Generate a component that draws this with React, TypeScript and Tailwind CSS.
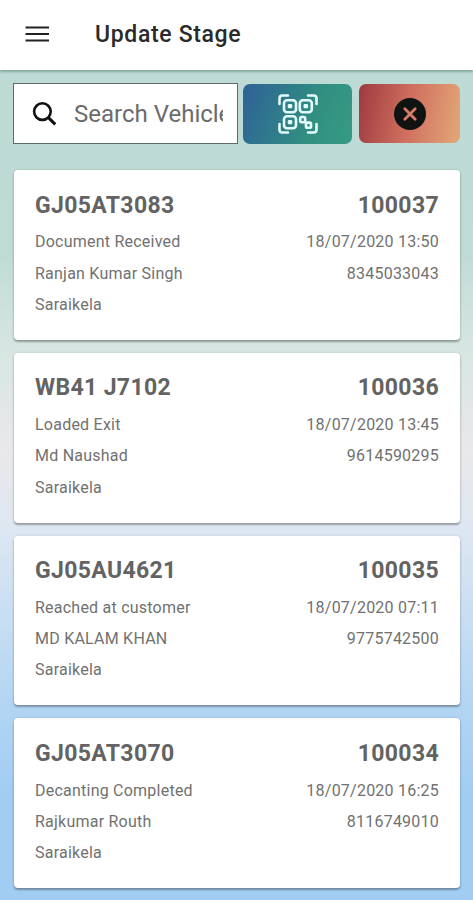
import { useState } from 'react'

interface Vehicle {
  number: string
  token: string
  stage: string
  time: string
  driver: string
  phone: string
  location: string
}

const vehicles: Vehicle[] = [
  { number: 'GJ05AT3083', token: '100037', stage: 'Document Received', time: '18/07/2020 13:50', driver: 'Ranjan Kumar Singh', phone: '8345033043', location: 'Saraikela' },
  { number: 'WB41 J7102', token: '100036', stage: 'Loaded Exit', time: '18/07/2020 13:45', driver: 'Md Naushad', phone: '9614590295', location: 'Saraikela' },
  { number: 'GJ05AU4621', token: '100035', stage: 'Reached at customer', time: '18/07/2020 07:11', driver: 'MD KALAM KHAN', phone: '9775742500', location: 'Saraikela' },
  { number: 'GJ05AT3070', token: '100034', stage: 'Decanting Completed', time: '18/07/2020 16:25', driver: 'Rajkumar Routh', phone: '8116749010', location: 'Saraikela' },
]

function MenuIcon() {
  return (
    <svg className="h-[18px] w-6" viewBox="0 0 24 18" stroke="#222" strokeWidth="2.2">
      <path d="M.5 1.5h23.5M.5 8h23.5M.5 14.5h23.5" />
    </svg>
  )
}

function SearchIcon() {
  return (
    <svg className="h-6 w-6 shrink-0" viewBox="0 0 24 24" fill="none" stroke="#111" strokeWidth="2.6">
      <circle cx="10.4" cy="9.6" r="8.3" />
      <path d="M16.2 15.4l7 7" strokeWidth="3" />
    </svg>
  )
}

function QrIcon() {
  return (
    <svg className="h-10 w-10" viewBox="0 0 40 40" fill="none" stroke="#e2fbfa" strokeWidth="2.6" strokeLinecap="round" strokeLinejoin="round">
      <path d="M1.5 10V4.3a2.8 2.8 0 0 1 2.8-2.8H10M30 1.5h5.7a2.8 2.8 0 0 1 2.8 2.8V10M38.5 30v5.7a2.8 2.8 0 0 1-2.8 2.8H30M10 38.5H4.3a2.8 2.8 0 0 1-2.8-2.8V30" />
      <rect x="6" y="6.2" width="12" height="12" rx="3" />
      <rect x="21.8" y="6.2" width="12" height="12" rx="3" />
      <rect x="6" y="22.2" width="12" height="12" rx="3" />
      <path d="M11 11.4h2v1.6h-2zM26.8 11.4h2v1.6h-2zM11 27.4h2v1.6h-2z" />
      <rect x="22.2" y="23" width="5" height="5.2" rx="1.4" />
      <rect x="28" y="28.6" width="5" height="5.2" rx="1.4" />
      <path d="M27 28l1.2 1" />
    </svg>
  )
}

function ClearIcon() {
  return (
    <svg className="h-8 w-8" viewBox="0 0 32 32">
      <circle cx="16" cy="16" r="16" fill="#111312" />
      <path d="M10.8 10.8l10.4 10.4M21.2 10.8L10.8 21.2" stroke="#d97b69" strokeWidth="2.8" strokeLinecap="round" />
    </svg>
  )
}

function VehicleCard({ vehicle }: { vehicle: Vehicle }) {
  return (
    <div className="h-[169.7px] rounded-[4px] bg-white px-[21px] pt-[19.6px] text-[#717171] shadow-[0_2px_2px_rgba(0,0,0,0.3),0_0_3px_rgba(0,0,0,0.12)]">
      <div className="flex h-8 items-center justify-between text-[23px] font-bold tracking-[0.35px] text-[#636363]">
        <span>{vehicle.number}</span>
        <span>{vehicle.token}</span>
      </div>
      <div className="flex h-[31.2px] items-center justify-between pt-[9.8px] text-[16px] tracking-[0.23px]">
        <span>{vehicle.stage}</span>
        <span>{vehicle.time}</span>
      </div>
      <div className="flex h-[31.2px] items-center justify-between pt-[9.8px] text-[16px] tracking-[0.23px]">
        <span>{vehicle.driver}</span>
        <span>{vehicle.phone}</span>
      </div>
      <div className="flex h-[31.2px] items-center pt-[9.8px] text-[16px] tracking-[0.23px]">
        <span>{vehicle.location}</span>
      </div>
    </div>
  )
}

export default function App() {
  const [search, setSearch] = useState('')

  const filtered = vehicles.filter(v => v.number.toLowerCase().includes(search.toLowerCase()))

  return (
    <div className="h-[900px] w-full overflow-hidden bg-[linear-gradient(to_bottom,#bcdad3_0%,#bfdbd6_28%,#d7e6e2_39%,#e9e8ea_50%,#dde7f2_59%,#b5d6f3_77%,#a2cdf3_88%,#a2cdf3_100%)] font-[Roboto,sans-serif]">
      <header className="flex h-[70px] items-center bg-white pl-[25px] shadow-[0_2px_2px_rgba(70,110,100,0.45)]">
        <button aria-label="Menu">
          <MenuIcon />
        </button>
        <h1 className="pl-[46px] text-[23px] font-medium tracking-[0.66px] text-[#2a2a2a]">Update Stage</h1>
      </header>

      <main className="px-[13px] pt-[13px]">
        <div className="flex items-start">
          <div className="flex h-[61px] w-[225px] items-center gap-[18px] border-[1.5px] border-[#5f6b68] bg-white pr-[14px] pl-[18px]">
            <SearchIcon />
            <input
              type="text"
              value={search}
              onChange={(e) => setSearch(e.target.value)}
              placeholder="Search Vehicle"
              className="min-w-0 flex-1 text-[24px] text-[#444] outline-none placeholder:text-[#6b6b6b]"
            />
          </div>
          <button aria-label="Scan" className="mt-px ml-[5px] flex h-[60px] w-[109px] items-center justify-center rounded-[7px] bg-[linear-gradient(110deg,#2f6496_5%,#319080_65%,#359b84_100%)]">
            <QrIcon />
          </button>
          <button aria-label="Clear" className="mt-px ml-[7px] flex h-[59px] w-[101px] items-center justify-center rounded-[7px] bg-[linear-gradient(100deg,#a03c40_2%,#d0705f_50%,#e3a878_100%)]">
            <ClearIcon />
          </button>
        </div>

        <div className="mt-[26.4px] flex flex-col gap-[13px] pl-px">
          {filtered.map((v) => (
            <VehicleCard key={v.token} vehicle={v} />
          ))}
        </div>
      </main>
    </div>
  )
}
